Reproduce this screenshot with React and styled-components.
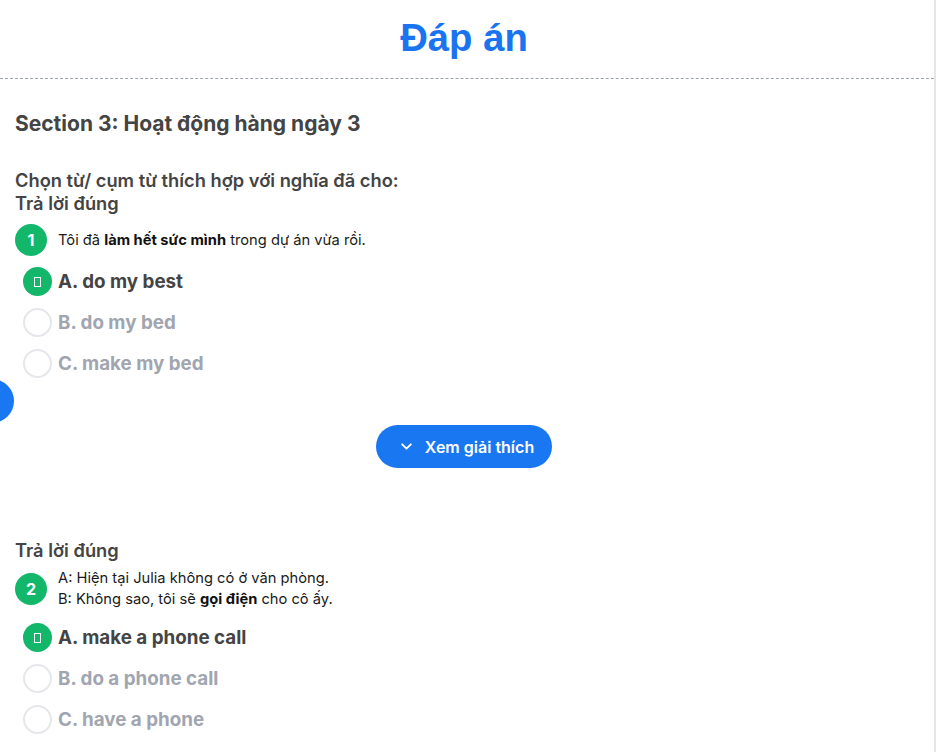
import React from "react";
import styled, { createGlobalStyle } from "styled-components";

const GlobalStyle = createGlobalStyle`
  html, body {
    margin: 0;
    padding: 0;
    background: #fff;
  }
  body {
    font-family: Inter, "Noto Sans", sans-serif;
    color: #444;
  }
`;

const Page = styled.div`
  width: 934px;
  min-height: 752px;
  border-right: 2px solid #e6e6e6;
  position: relative;
`;

const Header = styled.header`
  height: 78px;
  padding-right: 6px;
  display: flex;
  align-items: center;
  justify-content: center;
  border-bottom: 1px dashed #9ca3af;
`;

const Title = styled.h1`
  margin: 0 0 3px;
  font-family: "Liberation Sans", Arial, sans-serif;
  font-size: 38.3px;
  font-weight: 700;
  color: #1a73ef;
`;

const Content = styled.main`
  padding: 33px 21px 0 15px;
`;

const SectionTitle = styled.h2`
  margin: 0 0 33px;
  font-size: 21px;
  line-height: 24px;
  font-weight: 650;
  color: #444;
`;

const Label = styled.div`
  font-size: 18.3px;
  line-height: 23px;
  font-weight: 640;
  color: #444;
`;

const QuestionBlock = styled.section`
  margin-top: ${(p) => (p.$first ? "0" : "71px")};
`;

const QuestionRow = styled.div`
  display: flex;
  align-items: center;
  gap: 11px;
  margin-top: ${(p) => (p.$multi ? "6px" : "9px")};
`;

const Number = styled.div`
  width: 32px;
  height: 32px;
  flex: none;
  border-radius: 50%;
  background: #12b76a;
  color: #fff;
  font-weight: 700;
  font-size: 16px;
  display: flex;
  align-items: center;
  justify-content: center;
`;

const QuestionText = styled.div`
  font-size: 14.7px;
  line-height: 21px;
  color: #1a1a1a;

  b {
    font-weight: 700;
    color: #111;
  }
`;

const Options = styled.div`
  display: flex;
  flex-direction: column;
  margin-top: ${(p) => (p.$multi ? "7px" : "5px")};
`;

const Option = styled.div`
  height: 41px;
  display: flex;
  align-items: center;
  gap: 6px;
  padding-left: 8px;
  font-size: 18.8px;
  font-weight: 700;
  color: ${(p) => (p.$correct ? "#444" : "#a1a5b0")};
`;

const Radio = styled.span`
  width: 29px;
  height: 29px;
  flex: none;
  box-sizing: border-box;
  border-radius: 50%;
  display: flex;
  align-items: center;
  justify-content: center;
  background: ${(p) => (p.$correct ? "#12b76a" : "#fff")};
  border: ${(p) => (p.$correct ? "none" : "2px solid #e5e7eb")};
`;

const Tofu = styled.span`
  width: 5px;
  height: 8px;
  border: 1px solid #fff;
`;

const ExplainWrap = styled.div`
  display: flex;
  justify-content: center;
  margin-top: 41px;
`;

const ExplainButton = styled.button`
  height: 43px;
  padding: 0 18px 0 24px;
  border: none;
  border-radius: 22px;
  background: #1a77f2;
  color: #fff;
  font-family: Inter, sans-serif;
  font-size: 16px;
  font-weight: 600;
  display: flex;
  align-items: center;
  gap: 12px;
  cursor: pointer;
`;

const SideDot = styled.div`
  position: absolute;
  left: -30px;
  top: 379px;
  width: 44px;
  height: 44px;
  border-radius: 50%;
  background: #1a77f2;
`;

const questions = [
  {
    id: 1,
    text: [
      <>
        Tôi đã <b>làm hết sức mình</b> trong dự án vừa rồi.
      </>,
    ],
    options: ["A. do my best", "B. do my bed", "C. make my bed"],
  },
  {
    id: 2,
    text: [
      <>A: Hiện tại Julia không có ở văn phòng.</>,
      <>
        B: Không sao, tôi sẽ <b>gọi điện</b> cho cô ấy.
      </>,
    ],
    options: ["A. make a phone call", "B. do a phone call", "C. have a phone"],
  },
];

const Chevron = () => (
  <svg width="13" height="13" viewBox="0 0 24 24" fill="none" stroke="currentColor" strokeWidth="3.4" strokeLinecap="round" strokeLinejoin="round">
    <path d="M4 8l8 8 8-8" />
  </svg>
);

export default function App() {
  return (
    <>
      <GlobalStyle />
      <Page>
        <SideDot />
        <Header>
          <Title>Đáp án</Title>
        </Header>
        <Content>
          <SectionTitle>Section 3: Hoạt động hàng ngày 3</SectionTitle>
          <Label>Chọn từ/ cụm từ thích hợp với nghĩa đã cho:</Label>
          {questions.map((q, i) => {
            const multi = q.text.length > 1;
            return (
              <QuestionBlock key={q.id} $first={i === 0}>
                <Label>Trả lời đúng</Label>
                <QuestionRow $multi={multi}>
                  <Number>{q.id}</Number>
                  <QuestionText>
                    {q.text.map((line, j) => (
                      <div key={j}>{line}</div>
                    ))}
                  </QuestionText>
                </QuestionRow>
                <Options $multi={multi}>
                  {q.options.map((opt, k) => (
                    <Option key={opt} $correct={k === 0}>
                      <Radio $correct={k === 0}>{k === 0 && <Tofu />}</Radio>
                      {opt}
                    </Option>
                  ))}
                </Options>
                <ExplainWrap>
                  <ExplainButton>
                    <Chevron />
                    Xem giải thích
                  </ExplainButton>
                </ExplainWrap>
              </QuestionBlock>
            );
          })}
        </Content>
      </Page>
    </>
  );
}
